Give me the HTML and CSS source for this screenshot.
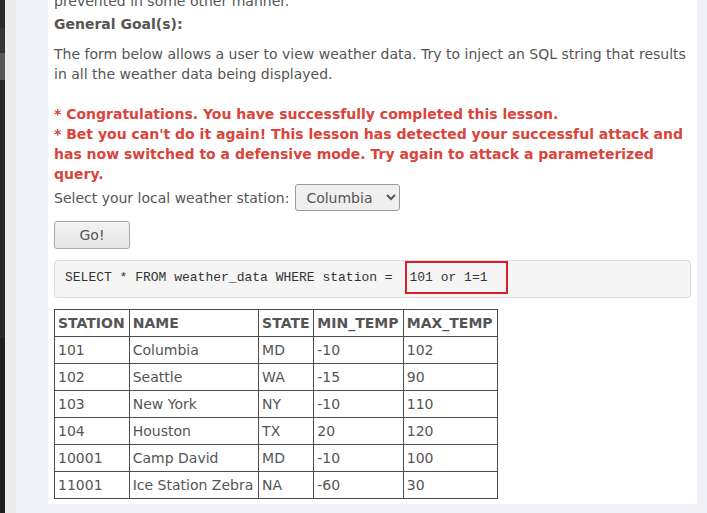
FILE: index.html
```html
<!DOCTYPE html>
<html lang="en">
<head>
    <meta charset="UTF-8">
    <meta name="viewport" content="width=device-width, initial-scale=1.0">
    <title>String SQL Injection</title>
    <link rel="stylesheet" href="styles.css">
</head>
<body>
    <div class="rail">
        <div class="rail-a"></div>
        <div class="rail-b"></div>
        <div class="rail-c"></div>
        <div class="rail-d"></div>
        <div class="rail-e"></div>
    </div>
    <div class="gutter"></div>

    <div class="main">
        <div class="panel">
            <p class="line">prevented in some other manner.</p>
            <h4 class="goal-title">General Goal(s):</h4>
            <p class="goal">The form below allows a user to view weather data. Try to inject an SQL string that results in all the weather data being displayed.</p>

            <div class="feedback">
                * Congratulations. You have successfully completed this lesson.<br>
                * Bet you can't do it again! This lesson has detected your successful attack and has now switched to a defensive mode. Try again to attack a parameterized query.
            </div>

            <div class="station-row">
                <label for="station">Select your local weather station:</label>
                <select id="station">
                    <option>Columbia</option>
                    <option>Seattle</option>
                    <option>New York</option>
                    <option>Houston</option>
                </select>
            </div>

            <button class="go">Go!</button>

            <div class="query">SELECT * FROM weather_data WHERE station = <span class="injected">101 or 1=1</span></div>

            <table class="results">
                <tr>
                    <th>STATION</th>
                    <th>NAME</th>
                    <th>STATE</th>
                    <th>MIN_TEMP</th>
                    <th>MAX_TEMP</th>
                </tr>
                <tr><td>101</td><td>Columbia</td><td>MD</td><td>-10</td><td>102</td></tr>
                <tr><td>102</td><td>Seattle</td><td>WA</td><td>-15</td><td>90</td></tr>
                <tr><td>103</td><td>New York</td><td>NY</td><td>-10</td><td>110</td></tr>
                <tr><td>104</td><td>Houston</td><td>TX</td><td>20</td><td>120</td></tr>
                <tr><td>10001</td><td>Camp David</td><td>MD</td><td>-10</td><td>100</td></tr>
                <tr><td>11001</td><td>Ice Station Zebra</td><td>NA</td><td>-60</td><td>30</td></tr>
            </table>
        </div>
    </div>
</body>
</html>
```

FILE: styles.css
```css
body {
    margin: 0;
    height: 513px;
    overflow: hidden;
    display: flex;
    background-color: #f0f0f7;
    font-family: "DejaVu Sans", Verdana, sans-serif;
    font-size: 14px;
    line-height: 20px;
    color: #555555;
}
.rail {
    width: 5px;
    display: flex;
    flex-direction: column;
}
.rail-a { height: 28px; background-color: #2b2b2b; }
.rail-b { height: 25px; background-color: #353535; }
.rail-c { height: 27px; background-color: #575757; }
.rail-d { height: 258px; background-color: #282828; }
.rail-e { flex: 1; background-color: #1d1d1d; }
.gutter {
    width: 11px;
    background-color: #ececec;
}
.main {
    flex: 1;
    padding: 0 10px 0 32px;
}
.panel {
    margin-top: -9px;
    background-color: #ffffff;
    padding: 0 6px 5px 6px;
}
.line {
    margin: 0;
}
.goal-title {
    margin: 3px 0 0 0;
    font-size: 14px;
    font-weight: bold;
}
.goal {
    margin: 10px 0 0 0;
}
.feedback {
    margin-top: 20px;
    color: #d9443b;
    font-weight: bold;
}
.station-row {
    display: flex;
    align-items: center;
    height: 27px;
}
.station-row select {
    margin-left: 6px;
    height: 27px;
    width: 105px;
    font-family: "DejaVu Sans", Verdana, sans-serif;
    font-size: 14px;
    color: #555555;
    background-color: #efefef;
    border: 1px solid #9a9a9a;
    border-radius: 3px;
    padding: 0 6px;
}
.go {
    display: block;
    margin-top: 10px;
    width: 76px;
    height: 28px;
    font-family: "DejaVu Sans", Verdana, sans-serif;
    font-size: 14px;
    color: #555555;
    background: linear-gradient(#f3f3f3, #e6e6e6);
    border: 1px solid #a9a9a9;
    border-radius: 3px;
    cursor: pointer;
}
.query {
    margin-top: 11px;
    padding: 0 10px 3px 10px;
    background-color: #f5f5f5;
    border: 1px solid #dcdcdc;
    border-radius: 4px;
    font-family: "Liberation Mono", "Courier New", monospace;
    font-size: 13px;
    color: #333333;
}
.injected {
    display: inline-block;
    margin-left: 5px;
    padding: 6px 19px 6px 2px;
    line-height: 17px;
    border: 2px solid #d8202c;
}
.results {
    width: 444px;
    margin-top: 11px;
    border-collapse: collapse;
}
.results th,
.results td {
    border: 1px solid #4d4d4d;
    padding: 3px;
    text-align: left;
    white-space: nowrap;
}
.results th {
    font-weight: bold;
}
```
